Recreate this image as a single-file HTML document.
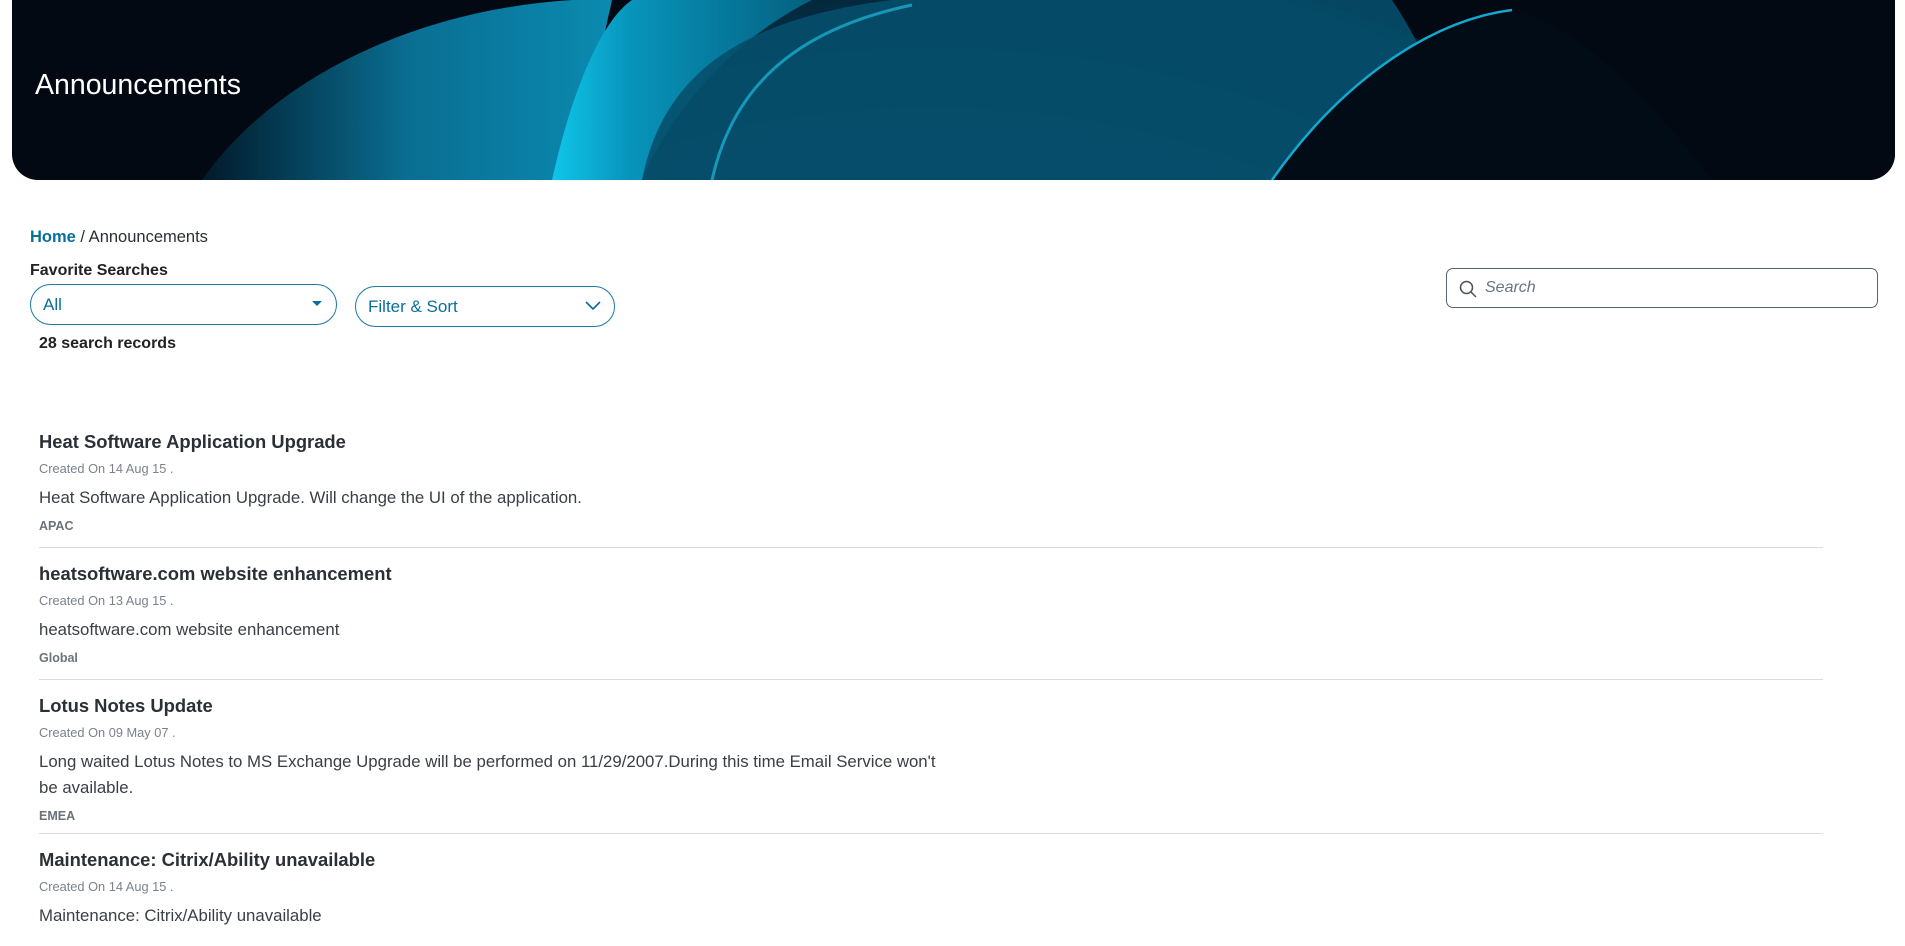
<!DOCTYPE html>
<html><head><meta charset="utf-8"><style>
*{margin:0;padding:0;box-sizing:border-box}
html,body{width:1905px;height:946px;overflow:hidden}
body{background:#fff;font-family:"Liberation Sans",sans-serif;color:#2b2f36;position:relative}
.hdr{position:absolute;left:12px;top:0;width:1883px;height:180px;border-radius:0 0 26px 26px;overflow:hidden;background:#020913}
.hdr svg{position:absolute;left:0;top:0}
.hdr h1{position:absolute;left:23px;top:69px;font-weight:400;font-size:28.5px;color:#fff}
.abs{position:absolute}
.bc{left:30px;top:228px;font-size:16.5px}
.bc a{color:#0a6e9a;font-weight:bold;text-decoration:none}
.fav{left:30px;top:262px;font-size:16px;font-weight:bold;color:#222}
.dd{border:1.5px solid #1a7aa3;border-radius:21px;height:41px;color:#0a6e9a;font-size:17px;padding:10px 12px}
.srch{left:1446px;top:268px;width:432px;height:40px;border:1.5px solid #5a626c;border-radius:7px;font-style:italic;color:#6b7280;font-size:16px;padding:10px 0 0 38px}
.rec{left:39px;top:335px;font-size:16px;font-weight:bold;color:#222}
.item{position:absolute;left:39px;width:1784px}
.t{font-size:18.4px;font-weight:bold;color:#2b2f36}
.c{font-size:12.8px;color:#7b828c;margin-top:8px}
.d{font-size:16.8px;color:#3a3f46;margin-top:9px;line-height:26px;max-width:910px}
.g{font-size:12.5px;font-weight:bold;color:#6b727c;margin-top:8px}
.hr{position:absolute;left:39px;width:1784px;height:1px;background:#d9dcdf}
</style></head><body>
<div class="hdr">
<svg width="1883" height="180" viewBox="0 0 1883 180">
<defs>
<radialGradient id="g1" cx="0.45" cy="0.55" r="0.6"><stop offset="0" stop-color="#07506e"/><stop offset="0.7" stop-color="#053d58"/><stop offset="1" stop-color="#021826"/></radialGradient>
<linearGradient id="g2" x1="0" y1="0" x2="1" y2="0"><stop offset="0" stop-color="#0fc6ea"/><stop offset="0.3" stop-color="#0894bb"/><stop offset="1" stop-color="#04607f"/></linearGradient>
<linearGradient id="g3" x1="0" y1="0" x2="1" y2="0"><stop offset="0" stop-color="#011a2a"/><stop offset="0.5" stop-color="#0a6e92"/><stop offset="1" stop-color="#0b8ab0"/></linearGradient>
</defs>
<ellipse cx="1000" cy="560" rx="820" ry="600" fill="url(#g1)"/>
<path d="M190 180 C260 80 400 10 560 0 L600 0 L560 180 Z" fill="url(#g3)"/>
<path d="M540 180 C560 90 590 20 620 0 L800 0 C720 40 660 110 630 180 Z" fill="url(#g2)"/>
<path d="M630 180 C650 80 720 20 880 0 L1380 0 C1420 60 1440 120 1450 180 Z" fill="#064f6c" opacity="0.9"/>
<path d="M700 180 C720 90 780 30 900 5" stroke="#1fb8dc" stroke-width="3" fill="none" opacity="0.7"/>
<path d="M1260 180 C1330 80 1420 20 1500 10 C1560 20 1640 100 1700 180 Z" fill="#010c16"/>
<path d="M1260 180 C1330 80 1420 20 1500 10" stroke="#12a8d0" stroke-width="2.5" fill="none"/>
<path d="M1580 0 C1660 40 1720 110 1740 180 L1883 180 L1883 0 Z" fill="#020913"/>
</svg>
<h1>Announcements</h1>
</div>
<div class="abs bc"><a>Home</a> / Announcements</div>
<div class="abs fav">Favorite Searches</div>
<div class="abs dd" style="left:30px;top:284px;width:307px">All<span style="position:absolute;right:14px;top:16px;width:0;height:0;border-left:5px solid transparent;border-right:5px solid transparent;border-top:5px solid #0a6e9a"></span></div>
<div class="abs dd" style="left:355px;top:286px;width:260px">Filter &amp; Sort<svg style="position:absolute;right:13px;top:14px" width="16" height="10" viewBox="0 0 16 10"><path d="M1 1 L8 8 L15 1" stroke="#0a6e9a" stroke-width="1.6" fill="none"/></svg></div>
<div class="abs srch"><svg style="position:absolute;left:12px;top:11px" width="18" height="18" viewBox="0 0 18 18"><circle cx="7.5" cy="7.5" r="6" stroke="#4b525c" stroke-width="1.5" fill="none"/><path d="M12 12 L17 17" stroke="#4b525c" stroke-width="1.5"/></svg>Search</div>
<div class="abs rec">28 search records</div>

<div class="item" style="top:431px"><div class="t">Heat Software Application Upgrade</div><div class="c">Created On 14 Aug 15 .</div><div class="d">Heat Software Application Upgrade. Will change the UI of the application.</div><div class="g">APAC</div></div>
<div class="hr" style="top:547px"></div>
<div class="item" style="top:563px"><div class="t">heatsoftware.com website enhancement</div><div class="c">Created On 13 Aug 15 .</div><div class="d">heatsoftware.com website enhancement</div><div class="g">Global</div></div>
<div class="hr" style="top:679px"></div>
<div class="item" style="top:695px"><div class="t">Lotus Notes Update</div><div class="c">Created On 09 May 07 .</div><div class="d">Long waited Lotus Notes to MS Exchange Upgrade will be performed on 11/29/2007.During this time Email Service won't be available.</div><div class="g">EMEA</div></div>
<div class="hr" style="top:833px"></div>
<div class="item" style="top:849px"><div class="t">Maintenance: Citrix/Ability unavailable</div><div class="c">Created On 14 Aug 15 .</div><div class="d">Maintenance: Citrix/Ability unavailable</div></div>
</body></html>
